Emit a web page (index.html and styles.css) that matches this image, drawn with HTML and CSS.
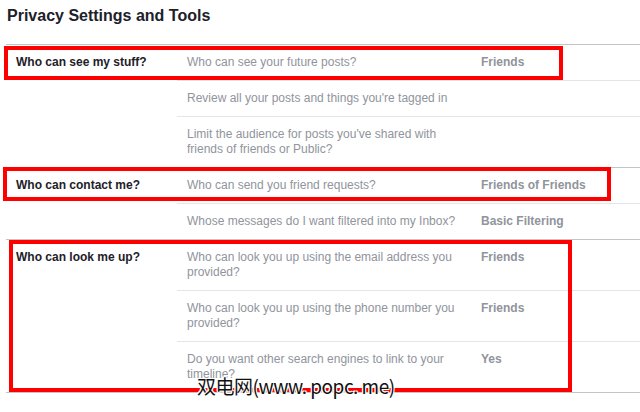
FILE: index.html
```html
<!DOCTYPE html>
<html lang="en">
<head>
    <meta charset="UTF-8">
    <title>Privacy Settings and Tools</title>
    <link rel="stylesheet" href="styles.css">
</head>
<body>

<h1 class="title">Privacy Settings and Tools</h1>

<div class="settings">
    <div class="section">
        <div class="label">Who can see my stuff?</div>
        <div class="rows">
            <div class="row">
                <div class="question">Who can see your future posts?</div>
                <div class="value">Friends</div>
            </div>
            <div class="row">
                <div class="question">Review all your posts and things you're tagged in</div>
                <div class="value"></div>
            </div>
            <div class="row">
                <div class="question">Limit the audience for posts you've shared with friends of friends or Public?</div>
                <div class="value"></div>
            </div>
        </div>
    </div>

    <div class="section">
        <div class="label">Who can contact me?</div>
        <div class="rows">
            <div class="row">
                <div class="question">Who can send you friend requests?</div>
                <div class="value">Friends of Friends</div>
            </div>
            <div class="row">
                <div class="question">Whose messages do I want filtered into my Inbox?</div>
                <div class="value">Basic Filtering</div>
            </div>
        </div>
    </div>

    <div class="section last">
        <div class="label">Who can look me up?</div>
        <div class="rows">
            <div class="row">
                <div class="question">Who can look you up using the email address you provided?</div>
                <div class="value">Friends</div>
            </div>
            <div class="row">
                <div class="question">Who can look you up using the phone number you provided?</div>
                <div class="value">Friends</div>
            </div>
            <div class="row">
                <div class="question">Do you want other search engines to link to your timeline?</div>
                <div class="value">Yes</div>
            </div>
        </div>
    </div>
</div>

<!-- highlight boxes drawn over the table -->
<div class="mark mark-stuff"></div>
<div class="mark mark-contact"></div>
<div class="mark mark-lookup"></div>

<div class="watermark">双电网(www. popc. me)</div>

</body>
</html>
```

FILE: styles.css
```css
body {
    margin: 0;
    font-family: "Liberation Sans", Arial, sans-serif;
    font-size: 12px;
    line-height: 15px;
    background: #fff;
    color: #1d2129;
    position: relative;
    width: 640px;
    height: 412px;
    overflow: hidden;
}
.title {
    font-size: 16px;
    line-height: 20px;
    font-weight: bold;
    margin: 6px 0 18px 7px;
    color: #1d2129;
}
.settings {
    margin-left: 6px;
}
.section {
    display: flex;
    border-top: 1px solid #c4c4c4;
}
.section.last {
    border-bottom: 1px solid #c4c4c4;
}
.label {
    width: 161px;
    padding: 10px 0 0 10px;
    font-weight: bold;
    flex-shrink: 0;
}
.rows {
    flex: 1;
}
.row {
    display: grid;
    grid-template-columns: 284px 1fr;
    gap: 10px;
    padding: 10px 0 10px 10px;
    border-top: 1px solid #e5e5e5;
    color: #90949c;
}
.row:first-child {
    border-top: none;
}
.value {
    font-weight: bold;
}
.mark {
    position: absolute;
    border: 4px solid #ff0000;
    box-sizing: border-box;
}
.mark-stuff {
    left: 4px;
    top: 46px;
    width: 559px;
    height: 34px;
}
.mark-contact {
    left: 3px;
    top: 167px;
    width: 608px;
    height: 34px;
}
.mark-lookup {
    left: 9px;
    top: 240px;
    width: 563px;
    height: 152px;
}
.watermark {
    position: absolute;
    left: 197px;
    top: 373px;
    font-family: "Noto Sans CJK SC", sans-serif;
    font-size: 19px;
    line-height: 26px;
    letter-spacing: -0.5px;
    color: #111;
    text-shadow: 1px 1px 0 #fff, -1px -1px 0 #fff, 1px -1px 0 #fff, -1px 1px 0 #fff;
}
```
